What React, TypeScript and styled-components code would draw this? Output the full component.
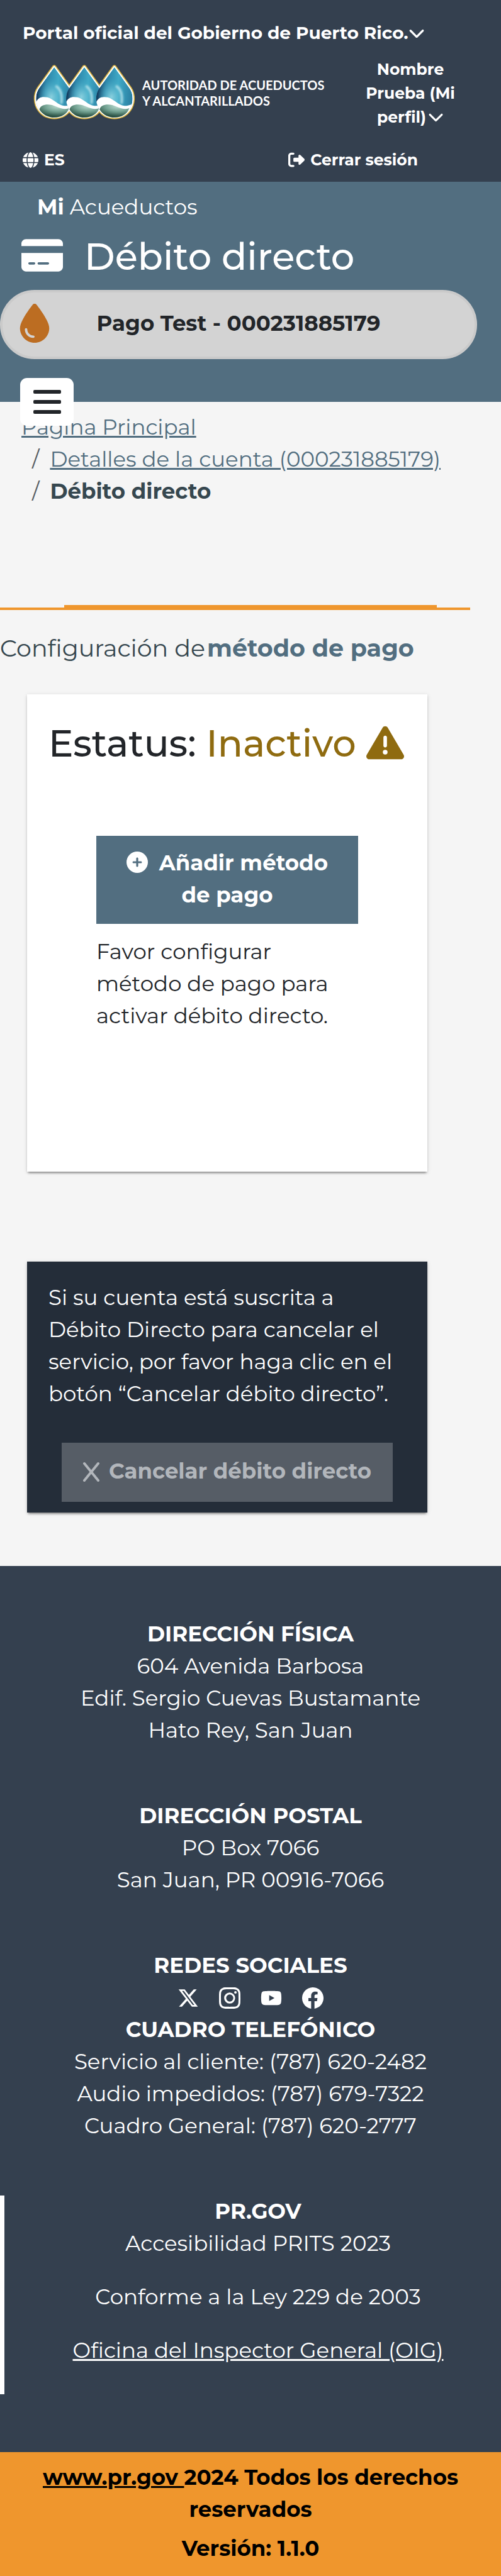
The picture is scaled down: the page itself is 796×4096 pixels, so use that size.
import React from "react";
import styled, { createGlobalStyle } from "styled-components";
import {
  FaChevronDown,
  FaCirclePlus,
  FaCreditCard,
  FaDroplet,
  FaGlobe,
  FaRightFromBracket,
  FaTriangleExclamation,
  FaXTwitter,
  FaYoutube,
} from "react-icons/fa6";
import { BsFacebook, BsInstagram } from "react-icons/bs";

const color = {
  navy: "#34404f",
  ink: "#222529",
  slate: "#526e80",
  page: "#f5f5f5",
  orange: "#ef962d",
  warning: "#8f6b10",
};

const GlobalStyle = createGlobalStyle`
  * { box-sizing: border-box; }
  body {
    margin: 0;
    background: ${color.page};
    color: ${color.ink};
    font: 400 34px/51px Montserrat, Inter, sans-serif;
  }
  h1, h2, h3, p, ul, ol { margin: 0; padding: 0; }
  a { color: inherit; text-underline-offset: auto; }
  button {
    border: 0;
    background: none;
    color: inherit;
    font: inherit;
    cursor: pointer;
  }
`;

const Header = styled.header`
  display: flex;
  flex-direction: column;
  padding: 31px 0 16px 36px;
  background: ${color.navy};
  color: #fff;
  font: 700 25px/38px Montserrat, Inter, sans-serif;
`;

const PortalToggle = styled.button`
  display: flex;
  align-items: center;
  align-self: flex-start;
  padding: 0;
  font-size: 28px;
  line-height: 42px;
`;

const BrandRow = styled.div`
  display: flex;
  align-items: center;
  justify-content: space-between;
  margin-top: 18px;
  padding: 0 64px 0 13px;
`;

const Brand = styled.a`
  display: flex;
  align-items: center;
  text-decoration: none;
  font: 700 20px/25px Lato, sans-serif;
`;

const ProfileToggle = styled.button`
  width: 160px;
  padding: 0;
  text-align: center;

  svg {
    margin-left: 3px;
    vertical-align: -3px;
  }
`;

const SessionRow = styled.div`
  display: flex;
  justify-content: space-between;
  margin-top: 30px;
  padding-right: 132px;
`;

const SessionButton = styled.button`
  display: flex;
  align-items: center;
  gap: 9px;
  padding: 0;
`;

const Hero = styled.section`
  position: relative;
  padding: 15px 0 68px;
  background: ${color.slate};
  color: #fff;
`;

const Product = styled.p`
  padding-left: 59px;
`;

const TitleRow = styled.div`
  display: flex;
  align-items: flex-start;
  gap: 34px;
  margin: 18px 0;
  padding-left: 34px;
`;

const Title = styled.h1`
  font-size: 59px;
  font-weight: 500;
  line-height: 70px;
`;

const AccountButton = styled.button`
  display: grid;
  grid-template-columns: 1fr auto 1fr;
  align-items: center;
  width: calc(100% - 38px);
  height: 110px;
  padding: 0 20px 4px;
  border: 4px solid #cacaca;
  border-radius: 55px;
  background: #d3d3d3;
  color: ${color.ink};
  font-weight: 700;

  svg {
    color: #bc6d22;
  }
`;

const MenuButton = styled.button`
  position: absolute;
  bottom: -38px;
  left: 32px;
  display: flex;
  flex-direction: column;
  align-items: center;
  justify-content: center;
  gap: 10px;
  width: 85px;
  height: 76px;
  border-radius: 11px;
  background: #fff;
`;

const MenuBar = styled.span`
  width: 44px;
  height: 6px;
  border-radius: 2px;
  background: ${color.ink};
`;

const Breadcrumb = styled.ol`
  padding: 15px 34px 0;
  list-style: none;
  color: ${color.slate};
`;

const Crumb = styled.li`
  & + & {
    padding-left: 17px;
  }
  & + &::before {
    content: "/";
    padding-right: 17px;
    color: #565c62;
    font-weight: 400;
  }
  &[aria-current] {
    color: #36474f;
    font-weight: 700;
  }
`;

const TabRail = styled.div`
  margin-right: 49px;
  padding: 155px 53px 0 102px;
  border-bottom: 4px solid ${color.orange};
`;

const ActiveTab = styled.div`
  height: 4px;
  background: ${color.orange};
`;

const SectionTitle = styled.h2`
  display: flex;
  gap: 3px;
  margin-top: 32px;
  color: #36474f;
  font-size: 38px;
  font-weight: 400;
  line-height: 57px;

  strong {
    color: ${color.slate};
  }
`;

const Card = styled.section`
  margin: 45px 117px 0 43px;
  padding: 43px 20px 222px 34px;
  background: #fff;
  box-shadow: 0 4px 3px -2px rgba(0, 0, 0, 0.32), 0 2px 4px rgba(0, 0, 0, 0.14),
    0 1px 8px rgba(0, 0, 0, 0.08);
`;

const CancelCard = styled(Card)`
  display: flex;
  flex-direction: column;
  margin-top: 143px;
  margin-bottom: 85px;
  padding: 32px 34px 17px;
  background: #242d39;
  color: #fff;
`;

const CancelText = styled.p`
  padding-right: 6px;
`;

const Status = styled.h2`
  font-size: 59px;
  font-weight: 500;
  line-height: 70px;
  white-space: nowrap;

  span {
    color: ${color.warning};
  }
  svg {
    vertical-align: -8px;
  }
`;

const Setup = styled.div`
  margin: 112px 90px 0 76px;
`;

const AddButton = styled.button`
  display: block;
  width: 100%;
  padding: 18px 34px 20px;
  background: ${color.slate};
  color: #fff;
  font-weight: 700;

  svg {
    margin-right: 8px;
    vertical-align: -4px;
  }
`;

const SetupText = styled.p`
  margin-top: 19px;
`;

const CancelButton = styled.button`
  display: flex;
  align-items: center;
  align-self: center;
  gap: 15px;
  margin-top: 52px;
  padding: 20px 34px 23px;
  background: #565d66;
  color: #b2b6bb;
  font-weight: 700;
  white-space: nowrap;
`;

const Footer = styled.footer`
  display: flex;
  flex-direction: column;
  gap: 85px;
  padding: 83px 0 92px;
  background: ${color.navy};
  color: #fff;
  text-align: center;
`;

const FooterHeading = styled.h3`
  font-size: 34px;
  font-weight: 700;
  line-height: 51px;
`;

const SocialList = styled.ul`
  display: flex;
  align-items: center;
  justify-content: center;
  gap: 32px;
  height: 51px;
  list-style: none;

  a {
    display: block;
  }
  svg {
    display: block;
  }
`;

const GovBlock = styled.div`
  padding: 0 0 44px 17px;
  border-left: 7px solid #fff;

  p + p {
    margin-top: 34px;
  }
`;

const Legal = styled.div`
  padding: 15px 34px 18px;
  background: ${color.orange};
  color: #000;
  font-weight: 700;
  text-align: center;

  p + p {
    margin-top: 11px;
  }
`;

const dropPath =
  "M157 50L55 192C25 235 28 300 60 340C105 402 209 402 254 340C286 300 289 235 259 192Z";
const dropOffsets = [0, 203, 406];

function DropsLogo() {
  return (
    <svg width="177" height="106" viewBox="0 0 750 450" aria-hidden="true">
      <defs>
        <linearGradient id="water" x1="0" y1="0.3" x2="1" y2="0.4">
          <stop offset="0" stopColor="#0f2c4e" />
          <stop offset="0.28" stopColor="#2b83a8" />
          <stop offset="0.6" stopColor="#3fa9c6" />
          <stop offset="1" stopColor="#2b7fa2" />
        </linearGradient>
        <radialGradient id="glow" cx="0.42" cy="0.6" r="0.38">
          <stop offset="0" stopColor="#8fd3e0" stopOpacity="0.95" />
          <stop offset="1" stopColor="#49b8d0" stopOpacity="0" />
        </radialGradient>
        <radialGradient id="land" cx="0.62" cy="0.12" r="0.85">
          <stop offset="0" stopColor="#bddcd2" />
          <stop offset="0.5" stopColor="#74a393" />
          <stop offset="1" stopColor="#1f4638" />
        </radialGradient>
        <filter id="soft" x="-1" y="-0.3" width="3" height="1.6">
          <feGaussianBlur stdDeviation="6" />
        </filter>
        <clipPath id="drop">
          <path d={dropPath} />
        </clipPath>
      </defs>
      <g fill="none" strokeLinejoin="round">
        {dropOffsets.map((x) => (
          <path key={x} d={dropPath} transform={`translate(${x})`} stroke="#dcb540" strokeWidth="29" />
        ))}
        {dropOffsets.map((x) => (
          <path key={x} d={dropPath} transform={`translate(${x})`} stroke="#fff" strokeWidth="16" />
        ))}
      </g>
      {dropOffsets.map((x) => (
        <g key={x} transform={`translate(${x})`}>
          <g clipPath="url(#drop)">
            <path d={dropPath} fill="url(#water)" />
            <path d={dropPath} fill="url(#glow)" />
            <path
              d="M172 180C200 200 212 240 206 290"
              fill="none"
              stroke="#c9ebf1"
              strokeWidth="16"
              strokeLinecap="round"
              opacity="0.75"
              filter="url(#soft)"
            />
            <path
              d="M30 300C42 252 75 246 112 254C155 266 180 306 225 311C240 312 252 308 290 296V420H20Z"
              fill="#fff"
            />
          </g>
          <path
            d="M57 335C66 303 105 298 142 306C185 320 215 342 257 327C232 408 98 410 57 335Z"
            fill="url(#land)"
          />
        </g>
      ))}
    </svg>
  );
}

function CrossIcon() {
  return (
    <svg width="26" height="32" viewBox="0 0 26 32" aria-hidden="true">
      <path
        d="M2 3L24 30M24 3L2 30"
        fill="none"
        stroke="currentColor"
        strokeWidth="4"
        strokeLinecap="round"
      />
    </svg>
  );
}

const networks = [
  { name: "X", Icon: FaXTwitter },
  { name: "Instagram", Icon: BsInstagram },
  { name: "YouTube", Icon: FaYoutube },
  { name: "Facebook", Icon: BsFacebook },
];

export default function App() {
  return (
    <>
      <GlobalStyle />
      <Header>
        <PortalToggle type="button">
          Portal oficial del Gobierno de Puerto Rico.
          <FaChevronDown size={26} />
        </PortalToggle>
        <BrandRow>
          <Brand href="#">
            <DropsLogo />
            <span>
              AUTORIDAD DE ACUEDUCTOS
              <br />Y ALCANTARILLADOS
            </span>
          </Brand>
          <ProfileToggle type="button">
            Nombre Prueba (Mi perfil)
            <FaChevronDown size={25} />
          </ProfileToggle>
        </BrandRow>
        <SessionRow>
          <SessionButton type="button">
            <FaGlobe size={25} />
            ES
          </SessionButton>
          <SessionButton type="button">
            <FaRightFromBracket size={26} />
            Cerrar sesión
          </SessionButton>
        </SessionRow>
      </Header>

      <Hero>
        <Product>
          <strong>Mi</strong> Acueductos
        </Product>
        <TitleRow>
          <FaCreditCard size={66} />
          <Title>Débito directo</Title>
        </TitleRow>
        <AccountButton type="button">
          <FaDroplet size={62} />
          Pago Test - 000231885179
        </AccountButton>
        <MenuButton type="button" aria-label="Menú">
          <MenuBar />
          <MenuBar />
          <MenuBar />
        </MenuButton>
      </Hero>

      <main>
        <nav aria-label="Ruta">
          <Breadcrumb>
            <Crumb>
              <a href="#">Página Principal</a>
            </Crumb>
            <Crumb>
              <a href="#">Detalles de la cuenta (000231885179)</a>
            </Crumb>
            <Crumb aria-current="page">Débito directo</Crumb>
          </Breadcrumb>
        </nav>

        <TabRail>
          <ActiveTab />
        </TabRail>

        <SectionTitle>
          <span>Configuración de</span>
          <strong>método de pago</strong>
        </SectionTitle>

        <Card>
          <Status>
            Estatus: <span>Inactivo <FaTriangleExclamation size={60} /></span>
          </Status>
          <Setup>
            <AddButton type="button">
              <FaCirclePlus size={34} /> Añadir método de pago
            </AddButton>
            <SetupText>Favor configurar método de pago para activar débito directo.</SetupText>
          </Setup>
        </Card>

        <CancelCard>
          <CancelText>
            Si su cuenta está suscrita a Débito Directo para cancelar el servicio, por favor haga
            clic en el botón “Cancelar débito directo”.
          </CancelText>
          <CancelButton type="button" disabled>
            <CrossIcon />
            Cancelar débito directo
          </CancelButton>
        </CancelCard>
      </main>

      <Footer>
        <div>
          <FooterHeading>DIRECCIÓN FÍSICA</FooterHeading>
          <p>
            604 Avenida Barbosa
            <br />
            Edif. Sergio Cuevas Bustamante
            <br />
            Hato Rey, San Juan
          </p>
        </div>
        <div>
          <FooterHeading>DIRECCIÓN POSTAL</FooterHeading>
          <p>
            PO Box 7066
            <br />
            San Juan, PR 00916-7066
          </p>
        </div>
        <div>
          <FooterHeading>REDES SOCIALES</FooterHeading>
          <SocialList>
            {networks.map(({ name, Icon }) => (
              <li key={name}>
                <a href="#" aria-label={name}>
                  <Icon size={34} />
                </a>
              </li>
            ))}
          </SocialList>
          <FooterHeading>CUADRO TELEFÓNICO</FooterHeading>
          <p>
            Servicio al cliente: (787) 620-2482
            <br />
            Audio impedidos: (787) 679-7322
            <br />
            Cuadro General: (787) 620-2777
          </p>
        </div>
        <GovBlock>
          <FooterHeading>PR.GOV</FooterHeading>
          <p>Accesibilidad PRITS 2023</p>
          <p>Conforme a la Ley 229 de 2003</p>
          <p>
            <a href="#">Oficina del Inspector General (OIG)</a>
          </p>
        </GovBlock>
      </Footer>
      <Legal>
        <p>
          <a href="#">www.pr.gov </a>2024 Todos los derechos reservados
        </p>
        <p>Versión: 1.1.0</p>
      </Legal>
    </>
  );
}
